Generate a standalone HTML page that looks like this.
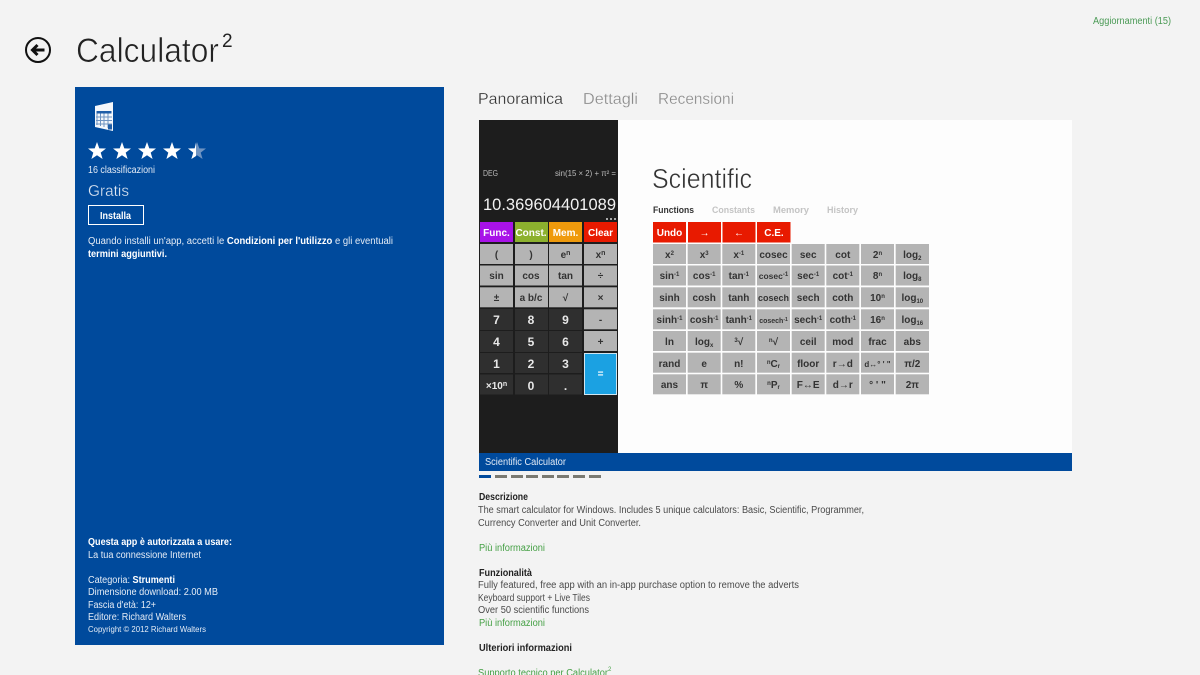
<!DOCTYPE html>
<html><head><meta charset="utf-8"><style>
html,body{margin:0;padding:0;background:#f3f3f3;overflow:hidden}
svg{display:block}
text{font-family:"Liberation Sans","DejaVu Sans",sans-serif;white-space:pre}
.k{text-anchor:middle;font-size:10px;font-weight:bold;fill:#333}
.d{font-size:10px;fill:#4a4a4a}
.b{font-size:10px;fill:#222;font-weight:bold}
.g{font-size:10px;fill:#45a045}
.p{font-size:10px;fill:#e4ecf6}
.pb{font-weight:bold;fill:#fff}
.gr{fill:#b4b4b4}
.dk{fill:#2f2f2f}
.rd{fill:#e81a00}
.n{text-anchor:middle;font-size:12px;font-weight:bold;fill:#e8e8e8}
.wk{text-anchor:middle;font-size:10px;font-weight:bold;fill:#fff}
.soft{filter:blur(.35px)}
</style></head><body>
<svg width="1200" height="675" viewBox="0 0 1200 675" xmlns="http://www.w3.org/2000/svg">
<rect width="1200" height="675" fill="#f3f3f3"/>

<!-- header -->
<circle cx="38" cy="50" r="12" fill="none" stroke="#111" stroke-width="2"/>
<path d="M44.5 50H32.500M37.5 45L32.500 50L37.5 55" fill="none" stroke="#111" stroke-width="3"/>
<text x="76" y="62" font-size="34" fill="#222" stroke="#f3f3f3" stroke-width=".6" textLength="143" lengthAdjust="spacingAndGlyphs">Calculator</text>
<text x="222" y="47" font-size="19" fill="#222">2</text>
<text x="1093" y="24" font-size="10" fill="#4a9a55" textLength="78" lengthAdjust="spacingAndGlyphs">Aggiornamenti (15)</text>

<!-- left panel -->
<rect x="75" y="87" width="369" height="558" fill="#004a9c"/>
<path d="M95 106L113 102V131L95 127Z" fill="#f4f7fb"/>
<g fill="#6f94c2">
<rect x="96.500" y="113" width="1" height="12"/>
<rect x="100" y="113" width="1" height="13"/><rect x="103.500" y="113" width="1" height="14"/><rect x="107.500" y="113" width="1" height="15"/>
<rect x="96" y="116.500" width="16" height="1"/><rect x="96" y="120" width="16" height="1"/><rect x="96" y="123.500" width="16" height="1"/>
</g>
<g fill="#1f5ea8">
<rect x="96.500" y="111" width="15" height="2.500"/>
<rect x="108" y="124.500" width="4" height="5"/>
</g>
<g fill="#fff">
<polygon points="97,142 99.300,148.400 106,148.500 100.700,152.600 102.600,159 97,155.300 91.400,159 93.300,152.600 88,148.500 94.700,148.400"/>
<polygon transform="translate(25)" points="97,142 99.300,148.400 106,148.500 100.700,152.600 102.600,159 97,155.300 91.400,159 93.300,152.600 88,148.500 94.700,148.400"/>
<polygon transform="translate(50)" points="97,142 99.300,148.400 106,148.500 100.700,152.600 102.600,159 97,155.300 91.400,159 93.300,152.600 88,148.500 94.700,148.400"/>
<polygon transform="translate(75)" points="97,142 99.300,148.400 106,148.500 100.700,152.600 102.600,159 97,155.300 91.400,159 93.300,152.600 88,148.500 94.700,148.400"/>
<polygon transform="translate(100)" fill="#6f94c2" points="97,142 99.300,148.400 106,148.500 100.700,152.600 102.600,159 97,155.300 91.400,159 93.300,152.600 88,148.500 94.700,148.400"/>
<path d="M196 142.500V156L191.400 159L193.300 152.600L188 148.500L194.700 148.400Z"/>
</g>
<text class="p" x="88" y="173" textLength="67" lengthAdjust="spacingAndGlyphs">16 classificazioni</text>
<text x="88" y="196" font-size="16" fill="#dfe8f3" stroke="#004a9c" stroke-width=".3" textLength="41" lengthAdjust="spacingAndGlyphs">Gratis</text>
<rect x="88.500" y="205.500" width="55" height="19" fill="none" stroke="#fff"/>
<text x="100" y="219" font-size="10" font-weight="bold" fill="#fff" textLength="31" lengthAdjust="spacingAndGlyphs">Installa</text>
<text class="p" x="88" y="244" textLength="305" lengthAdjust="spacingAndGlyphs">Quando installi un'app, accetti le <tspan class="pb">Condizioni per l'utilizzo</tspan> e gli eventuali</text>
<text class="p pb" x="88" y="257" textLength="79" lengthAdjust="spacingAndGlyphs">termini aggiuntivi.</text>
<text class="p pb" x="88" y="545" textLength="144" lengthAdjust="spacingAndGlyphs">Questa app è autorizzata a usare:</text>
<text class="p" x="88" y="558" textLength="113" lengthAdjust="spacingAndGlyphs">La tua connessione Internet</text>
<text class="p" x="88" y="583" textLength="87" lengthAdjust="spacingAndGlyphs">Categoria: <tspan class="pb">Strumenti</tspan></text>
<text class="p" x="88" y="595" textLength="130" lengthAdjust="spacingAndGlyphs">Dimensione download: 2.00 MB</text>
<text class="p" x="88" y="608" textLength="68" lengthAdjust="spacingAndGlyphs">Fascia d'età: 12+</text>
<text class="p" x="88" y="620" textLength="98" lengthAdjust="spacingAndGlyphs">Editore: Richard Walters</text>
<text x="88" y="632" font-size="8" fill="#e4ecf6" textLength="118" lengthAdjust="spacingAndGlyphs">Copyright © 2012 Richard Walters</text>

<!-- tabs -->
<text x="478" y="104" font-size="16" fill="#333" stroke="#f3f3f3" stroke-width=".25" textLength="85" lengthAdjust="spacingAndGlyphs">Panoramica</text>
<text x="583" y="104" font-size="16" fill="#8a8a8a" stroke="#f3f3f3" stroke-width=".25" textLength="55" lengthAdjust="spacingAndGlyphs">Dettagli</text>
<text x="658" y="104" font-size="16" fill="#8a8a8a" stroke="#f3f3f3" stroke-width=".25" textLength="76" lengthAdjust="spacingAndGlyphs">Recensioni</text>

<!-- screenshot -->
<g class="soft">
<rect x="479" y="120" width="593" height="333" fill="#fdfdfd"/>
<rect x="479" y="120" width="139" height="333" fill="#1d1d1d"/>
<rect x="479" y="453" width="593" height="18" fill="#004a9c"/>
<text x="485" y="465" font-size="10" fill="#e4ecf6" textLength="81" lengthAdjust="spacingAndGlyphs">Scientific Calculator</text>

<text x="483" y="176" font-size="8" fill="#bbb" textLength="15" lengthAdjust="spacingAndGlyphs">DEG</text>
<text x="555" y="176" font-size="8" fill="#bbb" textLength="61" lengthAdjust="spacingAndGlyphs">sin(15 × 2) + π² =</text>
<text x="483" y="210" font-size="17" fill="#f2f2f2" textLength="133" lengthAdjust="spacingAndGlyphs">10.369604401089</text>
<g fill="#aaa"><rect x="606" y="218" width="2" height="2"/><rect x="610" y="218" width="2" height="2"/><rect x="614" y="218" width="2" height="2"/></g>

<!-- left keys -->
<rect x="480" y="222" width="33" height="20" fill="#a812e8"/>
<rect x="515" y="222" width="33" height="20" fill="#8cb12e"/>
<rect x="549" y="222" width="33" height="20" fill="#ef9a0c"/>
<rect x="584" y="222" width="33" height="20" fill="#e81a00"/>
<text class="wk" x="496.500" y="236">Func.</text><text class="wk" x="531" y="236">Const.</text><text class="wk" x="565.500" y="236">Mem.</text><text class="wk" x="600.500" y="236">Clear</text>

<g class="gr">
<rect x="480" y="244" width="33" height="20"/><rect x="515" y="244" width="33" height="20"/><rect x="549" y="244" width="33" height="20"/><rect x="584" y="244" width="33" height="20"/>
<rect x="480" y="265.500" width="33" height="20"/><rect x="515" y="265.500" width="33" height="20"/><rect x="549" y="265.500" width="33" height="20"/><rect x="584" y="265.500" width="33" height="20"/>
<rect x="480" y="287.300" width="33" height="20"/><rect x="515" y="287.300" width="33" height="20"/><rect x="549" y="287.300" width="33" height="20"/><rect x="584" y="287.300" width="33" height="20"/>
<rect x="584" y="309.300" width="33" height="20"/><rect x="584" y="331" width="33" height="20"/>
</g>
<g class="dk">
<rect x="480" y="309" width="33" height="21"/><rect x="515" y="309" width="33" height="21"/><rect x="549" y="309" width="33" height="21"/>
<rect x="480" y="331" width="33" height="21"/><rect x="515" y="331" width="33" height="21"/><rect x="549" y="331" width="33" height="21"/>
<rect x="480" y="353" width="33" height="20"/><rect x="515" y="353" width="33" height="20"/><rect x="549" y="353" width="33" height="20"/>
<rect x="480" y="374.500" width="33" height="20"/><rect x="515" y="374.500" width="33" height="20"/><rect x="549" y="374.500" width="33" height="20"/>
</g>
<rect x="584.500" y="353.500" width="32" height="41" fill="#1ba1e2" stroke="#cfe6f2"/>
<text class="wk" x="600.500" y="377" font-size="9">=</text>

<text class="k" x="496.500" y="258">(</text><text class="k" x="531" y="258">)</text><text class="k" x="565.500" y="258">e<tspan font-size="7" dy="-3">n</tspan></text><text class="k" x="600.500" y="258">x<tspan font-size="7" dy="-3">n</tspan></text>
<text class="k" x="496.500" y="279">sin</text><text class="k" x="531" y="279">cos</text><text class="k" x="565.500" y="279">tan</text><text class="k" x="600.500" y="279">÷</text>
<text class="k" x="496.500" y="301">±</text><text class="k" x="531" y="301">a b/c</text><text class="k" x="565.500" y="301">√</text><text class="k" x="600.500" y="301">×</text>
<text class="k" x="600.500" y="323">-</text><text class="k" x="600.500" y="345">+</text>
<text class="n" x="496.500" y="324">7</text><text class="n" x="531" y="324">8</text><text class="n" x="565.500" y="324">9</text>
<text class="n" x="496.500" y="346">4</text><text class="n" x="531" y="346">5</text><text class="n" x="565.500" y="346">6</text>
<text class="n" x="496.500" y="368">1</text><text class="n" x="531" y="368">2</text><text class="n" x="565.500" y="368">3</text>
<text class="n" x="496.500" y="389" style="font-size:10px">×10<tspan font-size="7" dy="-3">n</tspan></text><text class="n" x="531" y="390">0</text><text class="n" x="565.500" y="390">.</text>

<!-- scientific -->
<text x="652" y="188" font-size="28" fill="#333" stroke="#fdfdfd" stroke-width=".5" textLength="100" lengthAdjust="spacingAndGlyphs">Scientific</text>
<text x="653" y="213" font-size="9" font-weight="bold" fill="#333" textLength="41" lengthAdjust="spacingAndGlyphs">Functions</text>
<text x="712" y="213" font-size="9" font-weight="bold" fill="#c4c4c4" textLength="43" lengthAdjust="spacingAndGlyphs">Constants</text>
<text x="773" y="213" font-size="9" font-weight="bold" fill="#c4c4c4" textLength="36" lengthAdjust="spacingAndGlyphs">Memory</text>
<text x="827" y="213" font-size="9" font-weight="bold" fill="#c4c4c4" textLength="31" lengthAdjust="spacingAndGlyphs">History</text>

<g class="rd">
<rect x="653" y="222" width="33" height="20.500"/><rect x="688" y="222" width="33" height="20.500"/><rect x="722.500" y="222" width="33" height="20.500"/><rect x="757" y="222" width="33.500" height="20.500"/>
</g>
<text class="wk" x="669.500" y="236">Undo</text><text class="wk" x="704.500" y="236">→</text><text class="wk" x="739" y="236">←</text><text class="wk" x="774" y="236">C.E.</text>

<g class="gr">
<rect x="653" y="244" width="33" height="20"/><rect x="687.700" y="244" width="33" height="20"/><rect x="722.300" y="244" width="33" height="20"/><rect x="757" y="244" width="33" height="20"/><rect x="791.700" y="244" width="33" height="20"/><rect x="826.300" y="244" width="33" height="20"/><rect x="861" y="244" width="33" height="20"/><rect x="895.700" y="244" width="33.300" height="20"/>
<rect x="653" y="265.500" width="33" height="20"/><rect x="687.700" y="265.500" width="33" height="20"/><rect x="722.300" y="265.500" width="33" height="20"/><rect x="757" y="265.500" width="33" height="20"/><rect x="791.700" y="265.500" width="33" height="20"/><rect x="826.300" y="265.500" width="33" height="20"/><rect x="861" y="265.500" width="33" height="20"/><rect x="895.700" y="265.500" width="33.300" height="20"/>
<rect x="653" y="287.300" width="33" height="20"/><rect x="687.700" y="287.300" width="33" height="20"/><rect x="722.300" y="287.300" width="33" height="20"/><rect x="757" y="287.300" width="33" height="20"/><rect x="791.700" y="287.300" width="33" height="20"/><rect x="826.300" y="287.300" width="33" height="20"/><rect x="861" y="287.300" width="33" height="20"/><rect x="895.700" y="287.300" width="33.300" height="20"/>
<rect x="653" y="309.300" width="33" height="20"/><rect x="687.700" y="309.300" width="33" height="20"/><rect x="722.300" y="309.300" width="33" height="20"/><rect x="757" y="309.300" width="33" height="20"/><rect x="791.700" y="309.300" width="33" height="20"/><rect x="826.300" y="309.300" width="33" height="20"/><rect x="861" y="309.300" width="33" height="20"/><rect x="895.700" y="309.300" width="33.300" height="20"/>
<rect x="653" y="331" width="33" height="20"/><rect x="687.700" y="331" width="33" height="20"/><rect x="722.300" y="331" width="33" height="20"/><rect x="757" y="331" width="33" height="20"/><rect x="791.700" y="331" width="33" height="20"/><rect x="826.300" y="331" width="33" height="20"/><rect x="861" y="331" width="33" height="20"/><rect x="895.700" y="331" width="33.300" height="20"/>
<rect x="653" y="352.700" width="33" height="20"/><rect x="687.700" y="352.700" width="33" height="20"/><rect x="722.300" y="352.700" width="33" height="20"/><rect x="757" y="352.700" width="33" height="20"/><rect x="791.700" y="352.700" width="33" height="20"/><rect x="826.300" y="352.700" width="33" height="20"/><rect x="861" y="352.700" width="33" height="20"/><rect x="895.700" y="352.700" width="33.300" height="20"/>
<rect x="653" y="374.300" width="33" height="20"/><rect x="687.700" y="374.300" width="33" height="20"/><rect x="722.300" y="374.300" width="33" height="20"/><rect x="757" y="374.300" width="33" height="20"/><rect x="791.700" y="374.300" width="33" height="20"/><rect x="826.300" y="374.300" width="33" height="20"/><rect x="861" y="374.300" width="33" height="20"/><rect x="895.700" y="374.300" width="33.300" height="20"/>
</g>

<g>
<text class="k" x="669.500" y="258">x<tspan font-size="6" dy="-3">2</tspan></text><text class="k" x="704.200" y="258">x<tspan font-size="6" dy="-3">3</tspan></text><text class="k" x="738.800" y="258">x<tspan font-size="6" dy="-3">-1</tspan></text><text class="k" x="773.500" y="258">cosec</text><text class="k" x="808.200" y="258">sec</text><text class="k" x="842.800" y="258">cot</text><text class="k" x="877.500" y="258">2<tspan font-size="6" dy="-3">n</tspan></text><text class="k" x="912.300" y="258">log<tspan font-size="6" dy="2">2</tspan></text>

<text class="k" x="669.500" y="279">sin<tspan font-size="6" dy="-3">-1</tspan></text><text class="k" x="704.200" y="279">cos<tspan font-size="6" dy="-3">-1</tspan></text><text class="k" x="738.800" y="279">tan<tspan font-size="6" dy="-3">-1</tspan></text><text class="k" x="773.500" y="279" style="font-size:8.500px">cosec<tspan font-size="6" dy="-3">-1</tspan></text><text class="k" x="808.200" y="279">sec<tspan font-size="6" dy="-3">-1</tspan></text><text class="k" x="842.800" y="279">cot<tspan font-size="6" dy="-3">-1</tspan></text><text class="k" x="877.500" y="279">8<tspan font-size="6" dy="-3">n</tspan></text><text class="k" x="912.300" y="279">log<tspan font-size="6" dy="2">8</tspan></text>

<text class="k" x="669.500" y="301">sinh</text><text class="k" x="704.200" y="301">cosh</text><text class="k" x="738.800" y="301">tanh</text><text class="k" x="773.500" y="301" style="font-size:9px">cosech</text><text class="k" x="808.200" y="301">sech</text><text class="k" x="842.800" y="301">coth</text><text class="k" x="877.500" y="301">10<tspan font-size="6" dy="-3">n</tspan></text><text class="k" x="912.300" y="301">log<tspan font-size="6" dy="2">10</tspan></text>

<text class="k" x="669.500" y="323">sinh<tspan font-size="6" dy="-3">-1</tspan></text><text class="k" x="704.200" y="323">cosh<tspan font-size="6" dy="-3">-1</tspan></text><text class="k" x="738.800" y="323">tanh<tspan font-size="6" dy="-3">-1</tspan></text><text class="k" x="773.500" y="323" style="font-size:7px">cosech<tspan font-size="5" dy="-2">-1</tspan></text><text class="k" x="808.200" y="323">sech<tspan font-size="6" dy="-3">-1</tspan></text><text class="k" x="842.800" y="323">coth<tspan font-size="6" dy="-3">-1</tspan></text><text class="k" x="877.500" y="323">16<tspan font-size="6" dy="-3">n</tspan></text><text class="k" x="912.300" y="323">log<tspan font-size="6" dy="2">16</tspan></text>

<text class="k" x="669.500" y="345">ln</text><text class="k" x="704.200" y="345">log<tspan font-size="6" dy="2">x</tspan></text><text class="k" x="738.800" y="345"><tspan font-size="6" dy="-3">3</tspan><tspan dy="3">√</tspan></text><text class="k" x="773.500" y="345"><tspan font-size="6" dy="-3">n</tspan><tspan dy="3">√</tspan></text><text class="k" x="808.200" y="345">ceil</text><text class="k" x="842.800" y="345">mod</text><text class="k" x="877.500" y="345">frac</text><text class="k" x="912.300" y="345">abs</text>

<text class="k" x="669.500" y="367">rand</text><text class="k" x="704.200" y="367">e</text><text class="k" x="738.800" y="367">n!</text><text class="k" x="773.500" y="367"><tspan font-size="6" dy="-3">n</tspan><tspan dy="3">C</tspan><tspan font-size="6" dy="1">r</tspan></text><text class="k" x="808.200" y="367">floor</text><text class="k" x="842.800" y="367">r→d</text><text class="k" x="877.500" y="367" style="font-size:8px">d↔° ' "</text><text class="k" x="912.300" y="367">π/2</text>

<text class="k" x="669.500" y="388">ans</text><text class="k" x="704.200" y="388">π</text><text class="k" x="738.800" y="388">%</text><text class="k" x="773.500" y="388"><tspan font-size="6" dy="-3">n</tspan><tspan dy="3">P</tspan><tspan font-size="6" dy="1">r</tspan></text><text class="k" x="808.200" y="388">F↔E</text><text class="k" x="842.800" y="388">d→r</text><text class="k" x="877.500" y="388">° ' "</text><text class="k" x="912.300" y="388">2π</text>
</g>
</g>

<!-- pager -->
<rect x="479" y="475" width="12" height="3" fill="#004a9c"/>
<g fill="#7a7a72">
<rect x="495" y="475" width="12" height="3"/><rect x="511" y="475" width="12" height="3"/><rect x="526" y="475" width="12" height="3"/><rect x="542" y="475" width="12" height="3"/><rect x="557" y="475" width="12" height="3"/><rect x="573" y="475" width="12" height="3"/><rect x="589" y="475" width="12" height="3"/>
</g>

<!-- description -->
<text class="b" x="479" y="500" textLength="49" lengthAdjust="spacingAndGlyphs">Descrizione</text>
<text class="d" x="478" y="513" textLength="386" lengthAdjust="spacingAndGlyphs">The smart calculator for Windows. Includes 5 unique calculators: Basic, Scientific, Programmer,</text>
<text class="d" x="478" y="526" textLength="163" lengthAdjust="spacingAndGlyphs">Currency Converter and Unit Converter.</text>
<text class="g" x="479" y="551" textLength="66" lengthAdjust="spacingAndGlyphs">Più informazioni</text>
<text class="b" x="479" y="576" textLength="53" lengthAdjust="spacingAndGlyphs">Funzionalità</text>
<text class="d" x="478" y="588" textLength="321" lengthAdjust="spacingAndGlyphs">Fully featured, free app with an in-app purchase option to remove the adverts</text>
<text class="d" x="478" y="601" textLength="112" lengthAdjust="spacingAndGlyphs">Keyboard support + Live Tiles</text>
<text class="d" x="478" y="613" textLength="111" lengthAdjust="spacingAndGlyphs">Over 50 scientific functions</text>
<text class="g" x="479" y="626" textLength="66" lengthAdjust="spacingAndGlyphs">Più informazioni</text>
<text class="b" x="479" y="651" textLength="93" lengthAdjust="spacingAndGlyphs">Ulteriori informazioni</text>
<text class="g" x="478" y="676" textLength="130" lengthAdjust="spacingAndGlyphs">Supporto tecnico per Calculator</text>
<text x="608" y="671" font-size="6" fill="#45a045">2</text>
</svg>
</body></html>
